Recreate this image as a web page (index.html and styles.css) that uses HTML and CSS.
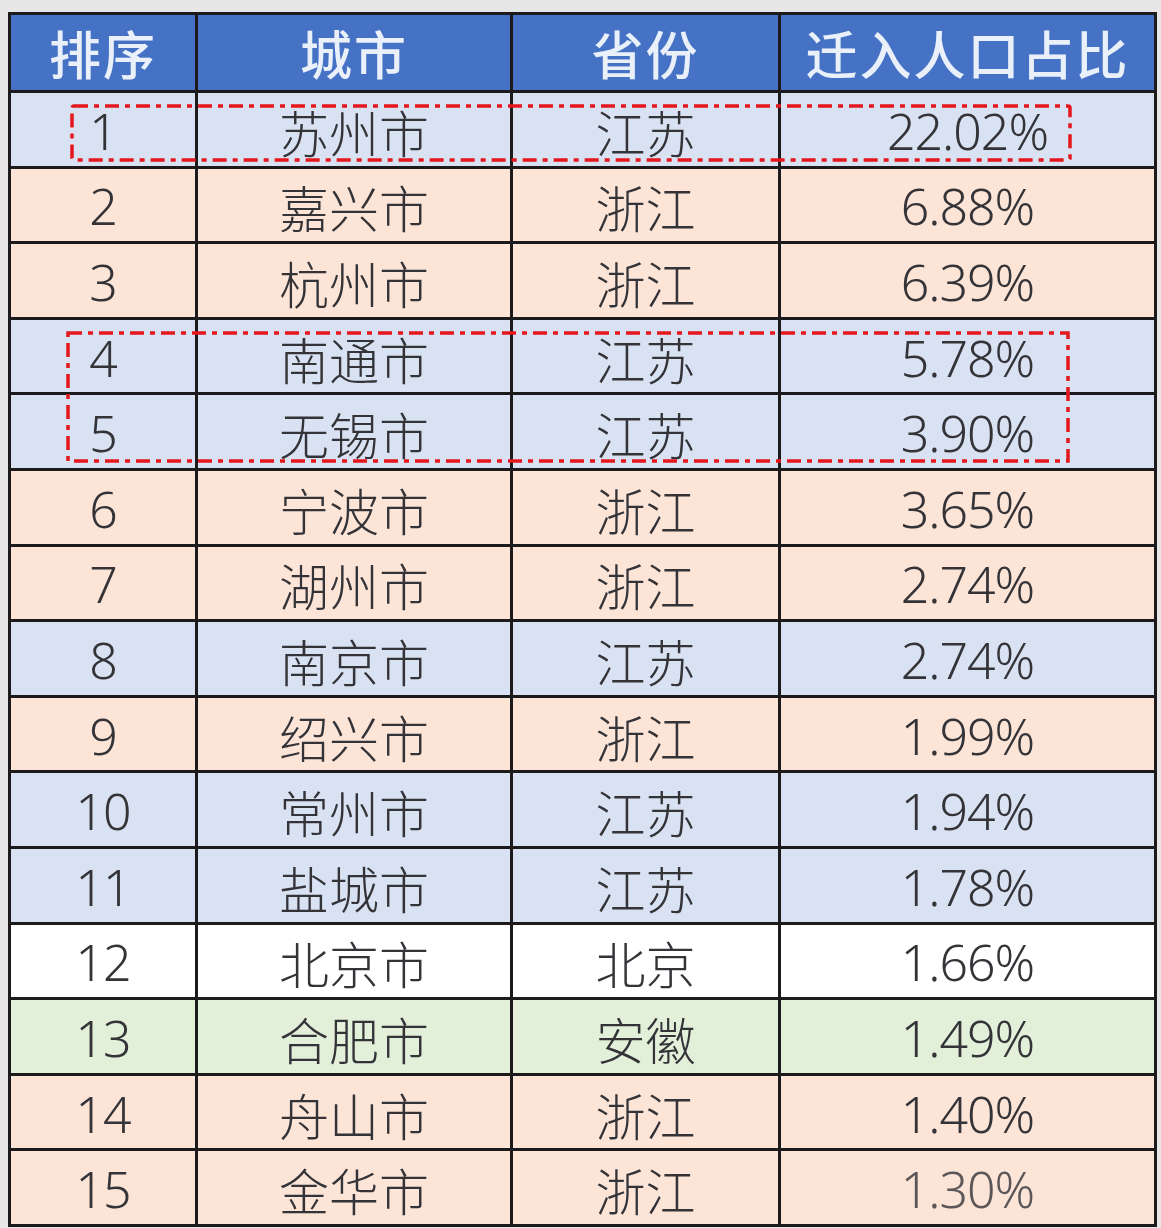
FILE: index.html
```html
<!DOCTYPE html>
<html lang="zh-CN">
<head>
<meta charset="utf-8">
<title>迁入人口占比</title>
<link rel="stylesheet" href="styles.css">
</head>
<body>
<div class="page">
  <div class="sheet">
    <div class="grid">
      <div class="cell head">排序</div><div class="cell head">城市</div><div class="cell head">省份</div><div class="cell head">迁入人口占比</div>

      <div class="cell b num">1</div><div class="cell b">苏州市</div><div class="cell b">江苏</div><div class="cell b num">22.02%</div>
      <div class="cell o num">2</div><div class="cell o">嘉兴市</div><div class="cell o">浙江</div><div class="cell o num">6.88%</div>
      <div class="cell o num">3</div><div class="cell o">杭州市</div><div class="cell o">浙江</div><div class="cell o num">6.39%</div>
      <div class="cell b num">4</div><div class="cell b">南通市</div><div class="cell b">江苏</div><div class="cell b num">5.78%</div>
      <div class="cell b num">5</div><div class="cell b">无锡市</div><div class="cell b">江苏</div><div class="cell b num">3.90%</div>
      <div class="cell o num">6</div><div class="cell o">宁波市</div><div class="cell o">浙江</div><div class="cell o num">3.65%</div>
      <div class="cell o num">7</div><div class="cell o">湖州市</div><div class="cell o">浙江</div><div class="cell o num">2.74%</div>
      <div class="cell b num">8</div><div class="cell b">南京市</div><div class="cell b">江苏</div><div class="cell b num">2.74%</div>
      <div class="cell o num">9</div><div class="cell o">绍兴市</div><div class="cell o">浙江</div><div class="cell o num">1.99%</div>
      <div class="cell b num">10</div><div class="cell b">常州市</div><div class="cell b">江苏</div><div class="cell b num">1.94%</div>
      <div class="cell b num">11</div><div class="cell b">盐城市</div><div class="cell b">江苏</div><div class="cell b num">1.78%</div>
      <div class="cell w num">12</div><div class="cell w">北京市</div><div class="cell w">北京</div><div class="cell w num">1.66%</div>
      <div class="cell g num">13</div><div class="cell g">合肥市</div><div class="cell g">安徽</div><div class="cell g num">1.49%</div>
      <div class="cell o num">14</div><div class="cell o">舟山市</div><div class="cell o">浙江</div><div class="cell o num">1.40%</div>
      <div class="cell o num">15</div><div class="cell o">金华市</div><div class="cell o">浙江</div><div class="cell o num"><span class="blur">1.30%</span></div>
    </div>

    <svg class="mark mark-1" width="1002" height="58" viewBox="0 0 1002 58" aria-hidden="true">
      <rect x="2" y="2" width="998" height="54" rx="2" fill="none" stroke="#e5161c" stroke-width="3.5" stroke-dasharray="14 6 5 6"/>
    </svg>
    <svg class="mark mark-2" width="1004" height="132" viewBox="0 0 1004 132" aria-hidden="true">
      <rect x="2" y="2" width="1000" height="128" fill="none" stroke="#e5161c" stroke-width="3.5" stroke-dasharray="14 6 5 6"/>
    </svg>
  </div>
</div>
</body>
</html>
```

FILE: styles.css
```css
html, body {
  margin: 0;
  padding: 0;
}

body {
  background: #e7e7e7;
  width: 1161px;
  height: 1228px;
  overflow: hidden;
  font-family: "Noto Sans CJK SC", "Noto Sans", sans-serif;
}

.page {
  padding: 12px 0 0 8px;
}

.sheet {
  position: relative;
  width: 1149px;
}

.grid {
  display: grid;
  grid-template-columns: 184px 312px 265px 373px;
  grid-template-rows: 75px repeat(15, 72.6px);
  gap: 3px;
  padding: 3px;
  background: #1c1a1a;
}

.cell {
  display: flex;
  align-items: center;
  justify-content: center;
  font-size: 50px;
  font-weight: 300;
  color: #333338;
  padding-top: 3px;
  box-sizing: border-box;
  white-space: nowrap;
}

.num {
  font-family: "Noto Sans", "Noto Sans CJK SC", sans-serif;
  font-size: 50px;
  font-weight: 300;
  letter-spacing: -1px;
}

.head {
  background: #4572c4;
  color: #eaf0fa;
  font-size: 52px;
  font-weight: 500;
  letter-spacing: 2px;
  padding-top: 0;
}

.b { background: #d9e2f3; }
.o { background: #fce4d7; }
.w { background: #ffffff; }
.g { background: #e2efd9; }

.blur {
  opacity: 0.8;
}

.mark {
  position: absolute;
  display: block;
}

.mark-1 {
  left: 62px;
  top: 92px;
}

.mark-2 {
  left: 58px;
  top: 319px;
}
```
